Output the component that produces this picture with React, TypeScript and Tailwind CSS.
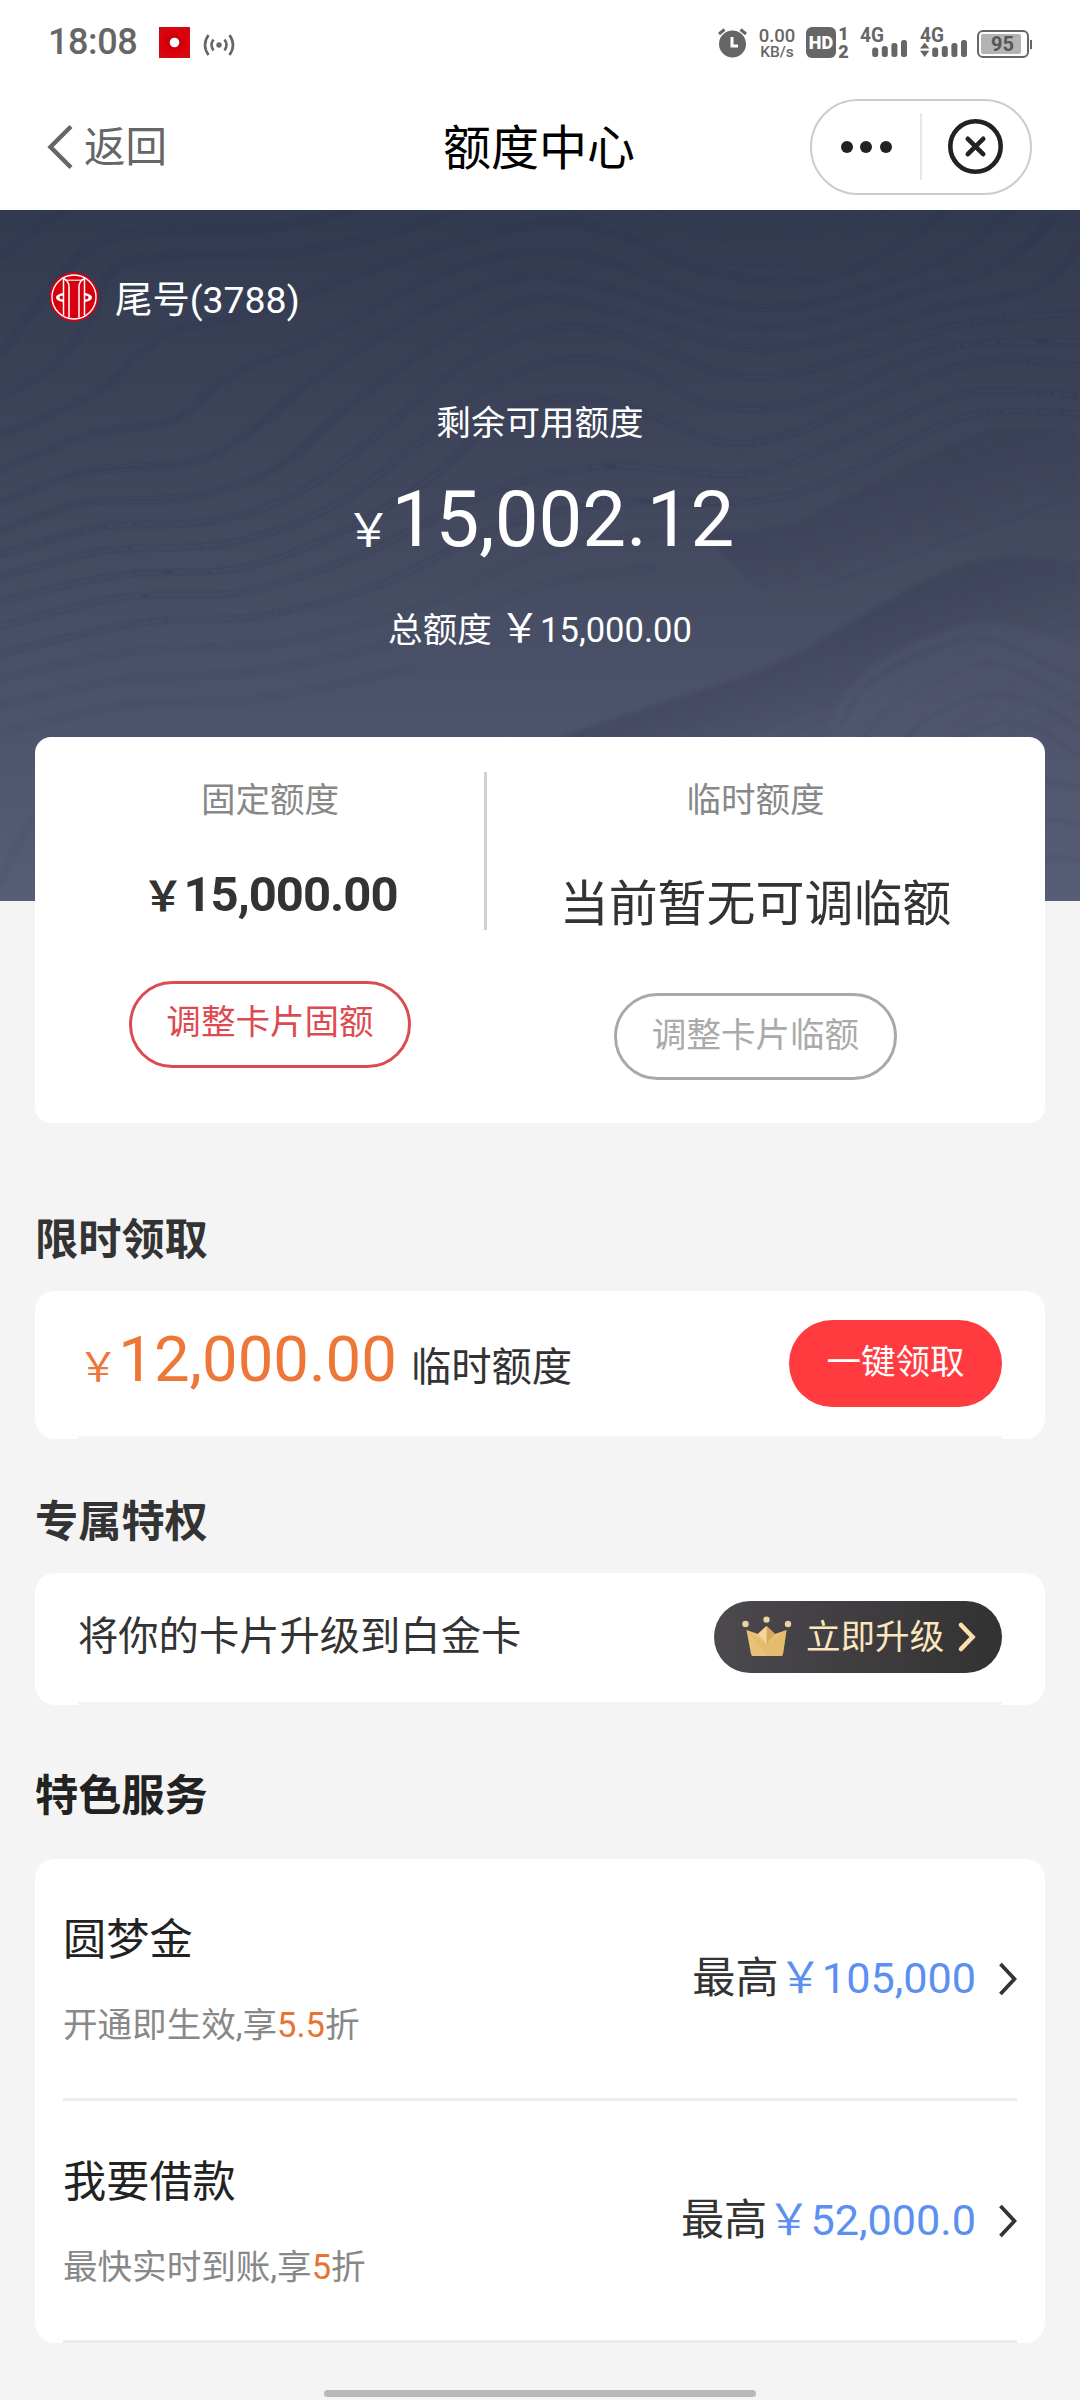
import React from "react";

type Pt = [number, number];

// Smooth curve through a list of points (Catmull-Rom converted to Bézier segments).
function smooth(points: Pt[]): string {
  let d = `M${points[0][0]} ${points[0][1]}`;
  for (let i = 0; i < points.length - 1; i++) {
    const p0 = points[Math.max(i - 1, 0)];
    const p1 = points[i];
    const p2 = points[i + 1];
    const p3 = points[Math.min(i + 2, points.length - 1)];
    d += ` C${p1[0] + (p2[0] - p0[0]) / 6} ${p1[1] + (p2[1] - p0[1]) / 6} ${p2[0] - (p3[0] - p1[0]) / 6} ${p2[1] - (p3[1] - p1[1]) / 6} ${p2[0]} ${p2[1]}`;
  }
  return d;
}

const contours: Pt[][] = [
  [[0, 140], [110, 50], [230, -20]],
  [[0, 420], [130, 250], [260, 110], [420, 65], [800, 50], [1050, -10]],
  [[0, 545], [160, 450], [260, 320], [330, 170], [500, 135], [850, 125], [1150, 60], [1350, -10]],
  [[0, 655], [280, 530], [390, 430], [500, 350], [700, 310], [900, 240], [1200, 130], [1568, 40], [1800, 70], [2000, 160], [2300, 210], [2550, 140], [2760, -10]],
  [[0, 755], [250, 655], [500, 610], [620, 520], [720, 455], [900, 385], [1150, 250], [1350, 160], [1568, 120], [1800, 160], [2050, 260], [2300, 280], [2600, 200], [2800, 110], [2950, -10]],
  [[0, 850], [250, 760], [550, 735], [720, 650], [900, 500], [1150, 340], [1350, 240], [1568, 190], [1850, 250], [2100, 330], [2350, 330], [2650, 240], [2900, 160], [3060, 20]],
  [[0, 930], [250, 850], [550, 835], [800, 750], [1000, 580], [1250, 400], [1450, 290], [1620, 255], [1900, 330], [2150, 400], [2400, 380], [2700, 290], [3000, 230], [3136, 110]],
  [[0, 1000], [300, 920], [600, 905], [850, 830], [1100, 650], [1300, 480], [1500, 370], [1700, 340], [1900, 400], [2100, 475], [2280, 480], [2500, 420], [2800, 330], [3136, 300]],
  [[0, 1065], [300, 990], [650, 970], [950, 870], [1200, 690], [1400, 520], [1640, 435], [1850, 460], [2050, 560], [2250, 575], [2450, 520], [2750, 400], [3136, 380]],
  [[0, 1135], [350, 1060], [700, 1040], [1000, 930], [1250, 780], [1450, 600], [1680, 545], [1900, 600], [2100, 675], [2300, 650], [2550, 540], [2850, 440], [3136, 450]],
  [[0, 1210], [350, 1125], [700, 1110], [1050, 1000], [1350, 850], [1600, 765], [1820, 745], [2100, 770], [2270, 745], [2520, 640], [2820, 530], [3136, 540]],
  [[0, 1290], [400, 1200], [750, 1180], [1100, 1090], [1450, 920], [1800, 850], [2200, 845], [2450, 770], [2800, 600], [3136, 590]],
];

const faintContours: Pt[][] = [
  [[0, 1360], [400, 1280], [800, 1260], [1200, 1160], [1550, 1000], [1850, 950], [2150, 940]],
  [[0, 1440], [350, 1365], [750, 1340], [1200, 1240], [1568, 1090], [1900, 1040]],
  [[0, 1520], [350, 1440], [750, 1420], [1200, 1330]],
  [[1650, -10], [1900, 90], [2150, 150], [2400, 120], [2600, -10]],
  [[1850, -10], [2050, 70], [2250, 90], [2420, 40], [2500, -10]],
  [[0, 1950], [90, 1780], [250, 1600]],
  [[120, 2007], [170, 1860], [330, 1680]],
  [[2440, 1500], [2530, 1370], [2750, 1260], [2900, 1255], [3136, 1370]],
  [[2460, 1600], [2580, 1450], [2800, 1330], [2950, 1335], [3136, 1440]],
  [[2520, 1650], [2680, 1490], [2850, 1410], [3000, 1430], [3136, 1510]],
  [[2600, 1650], [2750, 1550], [2900, 1490], [3020, 1510], [3136, 1590]],
  [[2990, 1680], [3060, 1660], [3136, 1680]],
  [[2990, 1790], [3060, 1770], [3136, 1790]],
  [[2990, 1900], [3060, 1880], [3136, 1890]],
];

const upperRidge: Pt[] = [[2050, 945], [2300, 910], [2500, 810], [2800, 665], [2950, 630], [3136, 645]];
const lowerRidge: Pt[] = [[1568, 1550], [1900, 1440], [2250, 1320], [2500, 1180], [2700, 1070], [2900, 1010], [3136, 1025]];
const mound: Pt[] = [[2410, 1560], [2430, 1450], [2530, 1330], [2720, 1230], [2900, 1200], [3136, 1270]];

function Waves() {
  return (
    <svg className="absolute inset-0 h-full w-full" viewBox="0 0 3136 2007" preserveAspectRatio="none" aria-hidden="true">
      <defs>
        <filter id="soft" x="-5%" y="-5%" width="110%" height="110%">
          <feGaussianBlur stdDeviation="6" />
        </filter>
        <linearGradient id="ridgeA" gradientUnits="userSpaceOnUse" x1="2600" y1="720" x2="2700" y2="1000">
          <stop offset="0" stopColor="#353b52" stopOpacity="0.5" />
          <stop offset="1" stopColor="#353b52" stopOpacity="0" />
        </linearGradient>
        <linearGradient id="ridgeB" gradientUnits="userSpaceOnUse" x1="2500" y1="1160" x2="2600" y2="1420">
          <stop offset="0" stopColor="#373d54" stopOpacity="0.5" />
          <stop offset="1" stopColor="#373d54" stopOpacity="0" />
        </linearGradient>
        <linearGradient id="moundFill" gradientUnits="userSpaceOnUse" x1="2500" y1="1250" x2="2800" y2="1700">
          <stop offset="0" stopColor="#5a6079" stopOpacity="0.25" />
          <stop offset="1" stopColor="#565c78" stopOpacity="0.1" />
        </linearGradient>
      </defs>
      <g filter="url(#soft)">
        <path d={`${smooth(upperRidge)} L3136 1100 L2200 1100 Z`} fill="url(#ridgeA)" />
        <path d={`${smooth(lowerRidge)} L3136 1560 L1568 1560 Z`} fill="url(#ridgeB)" />
        <path d={`${smooth(mound)} L3136 2007 L2410 2007 Z`} fill="url(#moundFill)" />
        <g fill="none" stroke="#2a3046" strokeWidth="11">
          {contours.map((c, i) => (
            <path key={i} d={smooth(c)} strokeOpacity={i < 7 ? 0.3 : 0.19} />
          ))}
        </g>
        <g fill="none" stroke="#343a52" strokeWidth="12" strokeOpacity="0.16">
          {faintContours.map((c, i) => (
            <path key={i} d={smooth(c)} />
          ))}
        </g>
      </g>
    </svg>
  );
}

function Signal({ arrows }: { arrows?: boolean }) {
  return (
    <svg className="overflow-visible" width="48" height="32" viewBox="0 0 48 32" fill="#666">
      <text x="0" y="15.500" fontFamily="Roboto" fontWeight="700" fontSize="20.500" textLength="24" lengthAdjust="spacingAndGlyphs">4G</text>
      {arrows && (
        <g>
          <path d="M0 22.500 4.700 16.500 9.400 22.500Z" />
          <path d="M0 24.800h9.400L4.700 31Z" />
        </g>
      )}
      <rect x="12.200" y="21.500" width="6" height="9.500" rx="2.500" />
      <rect x="21.800" y="20" width="6" height="11" rx="2.500" />
      <rect x="31.400" y="17" width="6" height="14" rx="2.500" />
      <rect x="41" y="14" width="6" height="17" rx="2.500" />
    </svg>
  );
}

function StatusBar() {
  return (
    <div className="flex h-[84px] items-start pt-[26px] text-[#666]">
      <span className="ml-[48px] w-[111px] pt-[1px] text-[36px] leading-[31px] font-medium tracking-[-0.4px]">18:08</span>
      <svg className="mt-[1px]" width="31" height="31" viewBox="0 0 31 31">
        <defs>
          <radialGradient id="rec">
            <stop offset="0.300" stopColor="#c40008" />
            <stop offset="1" stopColor="#e3000b" />
          </radialGradient>
        </defs>
        <rect width="31" height="31" fill="#cf0a10" />
        <circle cx="15.500" cy="15.500" r="14.500" fill="url(#rec)" />
        <circle cx="15.500" cy="15.500" r="4.800" fill="#fff" />
      </svg>
      <svg className="mt-[7px] ml-[13px]" width="32" height="24" viewBox="0 0 32 24" fill="none" stroke="#666" strokeWidth="2.600">
        <circle cx="16" cy="12" r="2.700" fill="#666" stroke="none" />
        <path d="M5.500 2Q-1.500 12 5.500 22M26.500 2Q33.500 12 26.500 22M10.500 6.500Q6.500 12 10.500 17.500M21.500 6.500Q25.500 12 21.500 17.500" />
      </svg>
      <svg className="ml-[483px]" width="30" height="32" viewBox="0 0 30 32">
        <circle cx="14.500" cy="18" r="13.500" fill="#666" />
        <path d="M1 8 6.500 3.500M28 8 22.500 3.500" stroke="#666" strokeWidth="3" />
        <path d="M14 11v9h6" fill="none" stroke="#fff" strokeWidth="3" />
      </svg>
      <div className="ml-[11px] flex w-[36px] flex-col items-center text-[18px] font-medium">
        <span className="h-[17px] text-[18.500px] leading-[20px]">0.00</span>
        <span className="text-[15.500px] leading-[18px]">KB/s</span>
      </div>
      <div className="mt-[1px] ml-[11px] flex h-[31px] w-[30px] items-center justify-center rounded-[6px] bg-[#666] text-[18px] font-black text-white">
        HD
      </div>
      <div className="ml-[1px] flex w-[13px] flex-col items-center text-[18px] leading-[18px] font-black">
        <span className="mt-[-1px]">1</span>
        <span>2</span>
      </div>
      <div className="ml-[10px]"><Signal /></div>
      <div className="ml-[12px]"><Signal arrows /></div>
      <div className="ml-[9px] flex items-center pt-[4px]">
        <div className="flex h-[28px] w-[52px] items-center rounded-[6px] border-[2.500px] border-[#666] p-[2px]">
          <div className="flex h-full w-[40px] items-center justify-center rounded-[2px] bg-[#b4b4b4] pl-[3px] text-[20px] font-bold text-[#555]">
            95
          </div>
        </div>
        <div className="ml-[1px] h-[9px] w-[2px] bg-[#666]" />
      </div>
    </div>
  );
}

function NavBar() {
  return (
    <div className="flex h-[126px] items-start">
      <div className="flex w-[443px] items-center pt-[40px] pl-[47px]">
        <svg width="27" height="46" viewBox="0 0 27 46" fill="none" stroke="#666" strokeWidth="4.500">
          <path d="M24 2.500 3.500 23 24 43.500" />
        </svg>
        <span className="ml-[10px] pt-[2px] text-[41.500px] leading-[44px] text-[#666]">返回</span>
      </div>
      <h1 className="w-[367px] pt-[36px] text-[48px] leading-[58px] font-normal text-black">额度中心</h1>
      <div className="mt-[15px] flex h-[96px] w-[222px] items-center rounded-[48px] border-2 border-[#ccc] pb-px">
        <div className="flex w-[108px] items-center justify-center gap-[7.500px]">
          <i className="h-3 w-3 rounded-full bg-[#222]" />
          <i className="h-3 w-3 rounded-full bg-[#222]" />
          <i className="h-3 w-3 rounded-full bg-[#222]" />
        </div>
        <div className="h-[67px] w-[2px] bg-[#e8e8e8]" />
        <svg className="ml-[25px]" width="57" height="57" viewBox="0 0 57 57" fill="none" stroke="#222" strokeWidth="4.600">
          <circle cx="28.500" cy="28.500" r="25.200" />
          <path d="M20.800 20.800 36.200 36.200M36.200 20.800 20.800 36.200" strokeLinecap="round" />
        </svg>
      </div>
    </div>
  );
}

function BankLogo() {
  return (
    <svg width="50" height="50" viewBox="0 0 50 50">
      <circle cx="25" cy="25" r="24.500" fill="#d7000f" />
      <circle cx="25" cy="25" r="22" fill="none" stroke="#fff" strokeWidth="1.400" />
      <g fill="none" stroke="#fff" strokeWidth="1.500">
        <path d="M14.500 43.500V6.500Q20 9 20 15V45.500" />
        <path d="M35.500 43.500V6.500Q30 9 30 15V45.500" />
        <path d="M16 8.200h18" strokeWidth="1.100" />
      </g>
      <path d="M14 21v2.600q-3.500 0-3.500 1.900t3.500 1.900V30q-7-1.500-7-4.500T14 21Z" fill="#fff" />
      <path d="M36 21v2.600q3.500 0 3.500 1.900T36 27.400V30q7-1.500 7-4.500T36 21Z" fill="#fff" />
    </svg>
  );
}

function Crown() {
  return (
    <svg width="50" height="42" viewBox="0 0 50 42">
      <path d="M4.500 14 16 18 24.500 10 33 18 44.500 14 41 38q-.3 2-2 2H11q-1.700 0-2-2Z" fill="#e8c377" />
      <path d="M24.500 10 33 18 24.500 28Z" fill="#d8a85a" />
      <path d="M24.500 10 16 18 24.500 28Z" fill="#f3d797" />
      <path d="M4.500 14 24.500 28 44.500 14 41 38q-.3 2-2 2H24.500Z" fill="#e3b768" opacity=".6" />
      <circle cx="3.500" cy="8" r="3.200" fill="#e8d3a2" />
      <circle cx="24.500" cy="3.600" r="3.200" fill="#e8d3a2" />
      <circle cx="46" cy="8" r="3.200" fill="#e8d3a2" />
    </svg>
  );
}

function Hero() {
  return (
    <section className="relative h-[691px] bg-linear-to-b from-[#323a50] via-[#444a60] to-[#575d76] text-white">
      <Waves />
      <div className="relative flex flex-col pt-[62px]">
        <div className="flex h-[50px] items-center pl-[49px]">
          <BankLogo />
          <span className="ml-[16px] pt-[6px] text-[37.400px] leading-[50px]">尾号(3788)</span>
        </div>
        <p className="mt-[76px] text-center text-[34.560px] leading-[50px]">剩余可用额度</p>
        <p className="mt-[22px] flex h-[100px] items-baseline justify-center leading-[100px]">
          <span className="text-[46px]">￥</span>
          <span className="text-[78px]">15,002.12</span>
        </p>
        <p className="mt-[34px] flex h-[50px] items-baseline justify-center text-[34.560px] leading-[50px]">
          <span>总额度</span>
          <span className="ml-[8px] text-[40.300px]">￥</span>
          <span>15,000.00</span>
        </p>
      </div>
    </section>
  );
}

function LimitCard() {
  return (
    <section className="relative mx-[35px] mt-[-164px] flex h-[386px] rounded-[16px] bg-white">
      <div className="flex w-[449px] flex-col items-center pt-[43px] pl-[21px]">
        <p className="text-[34.560px] leading-[40px] text-[#888]">固定额度</p>
        <p className="mt-[45px] flex h-[60px] items-baseline leading-[60px] font-bold text-[#333]">
          <span className="text-[41px]">￥</span>
          <span className="text-[49px] tracking-[-1px]">15,000.00</span>
        </p>
        <button className="mt-[56px] h-[87px] w-[282px] rounded-full border-[3px] border-[#dc4b50] pb-[3px] text-[34.560px] text-[#dc4b50]">
          调整卡片固额
        </button>
      </div>
      <div className="mt-[35px] h-[158px] w-[3px] bg-[#d0d0d0]" />
      <div className="flex flex-1 flex-col items-center pt-[43px] pr-[21px]">
        <p className="text-[34.560px] leading-[40px] text-[#888]">临时额度</p>
        <p className="mt-[55px] text-[48.960px] leading-[60px] text-[#333]">当前暂无可调临额</p>
        <button className="mt-[58px] h-[87px] w-[283px] rounded-full border-[3px] border-[#a9a9a9] pb-[2px] text-[34.560px] text-[#aaa]">
          调整卡片临额
        </button>
      </div>
    </section>
  );
}

function Service(props: { title: string; before: string; rate: string; amount: string }) {
  return (
    <div className="mx-[28px] flex h-[242px] items-center justify-between border-b-3 border-[#ececec]">
      <div className="pb-px">
        <h3 className="text-[43.200px] leading-[60px] font-normal text-[#222]">{props.title}</h3>
        <p className="mt-[34px] text-[34.560px] leading-[40px] text-[#888]">
          {props.before}
          <span className="text-[#e87434]">{props.rate}</span>折
        </p>
      </div>
      <div className="flex items-center text-[43.200px] leading-[60px] text-[#333]">
        <span>最高</span>
        <span className="text-[#5b8ff0]">￥{props.amount}</span>
        <svg className="ml-[22px]" width="19" height="36" viewBox="0 0 19 36" fill="none" stroke="#333" strokeWidth="3.800">
          <path d="M2.500 3 16.500 18 2.500 33" />
        </svg>
      </div>
    </div>
  );
}

export default function App() {
  return (
    <div className="h-[2400px] w-[1080px] overflow-hidden bg-[#f4f4f4] font-[Roboto,'Noto_Sans_CJK_SC',sans-serif]">
      <header className="h-[210px] bg-white">
        <StatusBar />
        <NavBar />
      </header>
      <Hero />
      <LimitCard />

      <h2 className="mt-[88px] ml-[35px] text-[43.200px] leading-[60px] font-bold text-[#333]">限时领取</h2>
      <section className="mx-[35px] mt-[20px] h-[148px] rounded-[20px] bg-white">
        <div className="mx-[43px] flex h-full items-start justify-between border-b-3 border-[#f4f4f4]">
          <p className="flex items-baseline pt-[18px] leading-[100px]">
            <span className="text-[40.300px] text-[#ee7637]">￥</span>
            <span className="text-[63.400px] text-[#ee7637]">12,000.00</span>
            <span className="ml-[14px] text-[40.300px] text-[#333]">临时额度</span>
          </p>
          <button className="mt-[29px] h-[87px] w-[213px] rounded-full bg-[#ff3b3f] pb-[1px] text-[34.560px] text-white">一键领取</button>
        </div>
      </section>

      <h2 className="mt-[54px] ml-[35px] text-[43.200px] leading-[60px] font-bold text-[#333]">专属特权</h2>
      <section className="mx-[35px] mt-[20px] h-[132px] rounded-[20px] bg-white">
        <div className="mx-[43px] flex h-full items-start justify-between border-b-3 border-[#f4f4f4]">
          <p className="pt-[34px] text-[40.300px] leading-[60px] text-[#333]">将你的卡片升级到白金卡</p>
          <button className="mt-[28px] flex h-[72px] w-[288px] items-center rounded-full bg-linear-to-r from-[#4c494f] to-[#333232] pl-[28px] text-[34.560px] text-[#fbe6bd]">
            <Crown />
            <span className="ml-[14px] pt-[2px]">立即升级</span>
            <svg className="ml-[13px]" width="20" height="32" viewBox="0 0 20 32" fill="none" stroke="#fbe0ab" strokeWidth="4.600" strokeLinecap="round">
              <path d="M4 4 15.500 16 4 28" />
            </svg>
          </button>
        </div>
      </section>

      <h2 className="mt-[62px] ml-[35px] text-[43.200px] leading-[60px] font-bold text-[#222]">特色服务</h2>
      <section className="mx-[35px] mt-[32px] h-[484px] rounded-[20px] bg-white">
        <Service title="圆梦金" before="开通即生效,享" rate="5.5" amount="105,000" />
        <Service title="我要借款" before="最快实时到账,享" rate="5" amount="52,000.0" />
      </section>

      <div className="mx-auto mt-[47px] h-[7px] w-[432px] rounded-full bg-[#b8b8b8]" />
    </div>
  );
}
